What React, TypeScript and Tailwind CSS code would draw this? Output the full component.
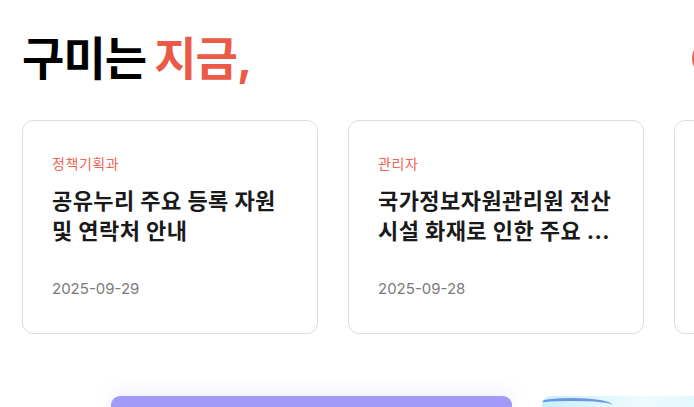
import React from 'react';

const posts = [
  { dept: '정책기획과', title: '공유누리 주요 등록 자원 및 연락처 안내', date: '2025-09-29' },
  { dept: '관리자', title: '국가정보자원관리원 전산시설 화재로 인한 주요 ...', date: '2025-09-28' },
  { dept: '', title: '', date: '' },
];

const font = "font-['Inter','Noto_Sans_CJK_KR',sans-serif]";

export default function App() {
  return (
    <div className={`relative h-[407px] w-full overflow-hidden bg-white ${font}`}>
      {/* Header */}
      <div className="flex w-[792px] items-center pl-[22px] pt-[30px]">
        <h2 className="text-[46px] font-bold leading-[56px] tracking-[-0.02em] text-black">
          구미는<span className="ml-[8px] text-[#ea5a47]">지금,</span>
        </h2>
        <button className="ml-auto h-[37px] w-[100px] rounded-full border-2 border-[#ea5a47] bg-white" />
      </div>

      {/* Cards */}
      <div className="mt-[34px] flex gap-[30px] pl-[22px]">
        {posts.map((p, i) => (
          <div
            key={i}
            className="flex h-[214px] w-[296px] shrink-0 flex-col rounded-[11px] border border-[#dedede] bg-white px-[29px] pt-[33px] pb-[33px]"
          >
            <span className="h-[20px] text-[14px] leading-[20px] tracking-[0.04em] text-[#ef6454]">{p.dept}</span>
            <p className="mt-[12px] line-clamp-2 text-[22px] font-bold leading-[30px] tracking-[0.02em] text-[#1a1a1a]">
              {p.title}
            </p>
            <span className="mt-auto text-[15px] leading-[22px] text-[#7a7a7a]">{p.date}</span>
          </div>
        ))}
      </div>

      {/* Bottom banners */}
      <div className="mt-[62px] flex gap-[30px] pl-[111px]">
        <div className="h-[40px] w-[401px] shrink-0 rounded-t-[9px] bg-[#a29af6] shadow-[0_-6px_18px_rgba(140,150,240,0.12)]" />
        <div className="relative h-[40px] w-[200px] shrink-0 overflow-hidden rounded-t-[9px] bg-gradient-to-r from-[#c6f0fb] via-[#eefbff] to-[#d8f6fb]">
          <div className="absolute left-[-10px] top-[2px] h-[14px] w-[80px] rounded-[50%] border-t-[3px] border-[#3f6fd8] opacity-70" />
          <div className="absolute bottom-0 left-[11px] h-[2px] w-[110px] bg-[#444]" />
        </div>
      </div>
    </div>
  );
}
